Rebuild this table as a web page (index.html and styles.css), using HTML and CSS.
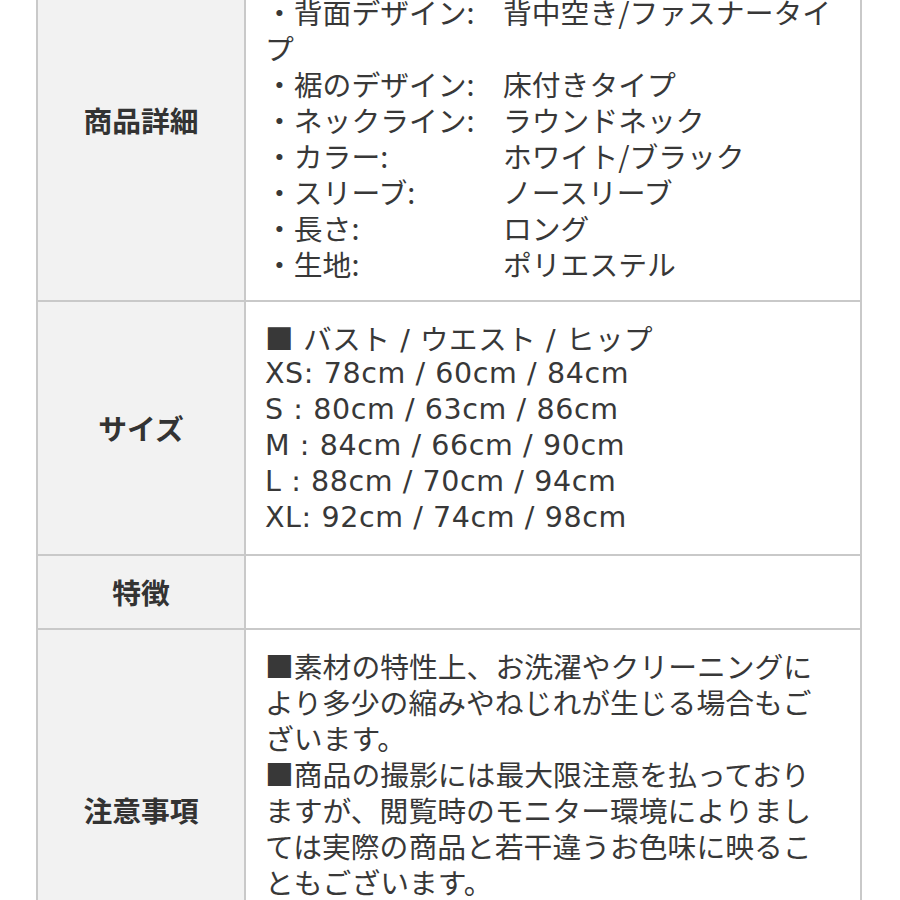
FILE: index.html
```html
<!DOCTYPE html>
<html lang="ja">
<head>
<meta charset="utf-8">
<title>商品情報</title>
<link rel="stylesheet" href="styles.css">
</head>
<body>
<div class="spec">
  <div class="th">商品詳細</div>
  <div class="td td-detail">
    <div><span class="key">・背面デザイン:</span>背中空き/ファスナータイプ</div>
    <div><span class="key">・裾のデザイン:</span>床付きタイプ</div>
    <div><span class="key">・ネックライン:</span>ラウンドネック</div>
    <div><span class="key">・カラー:</span>ホワイト/ブラック</div>
    <div><span class="key">・スリーブ:</span>ノースリーブ</div>
    <div><span class="key">・長さ:</span>ロング</div>
    <div><span class="key">・生地:</span>ポリエステル</div>
  </div>

  <div class="th">サイズ</div>
  <div class="td td-size">
    <div class="row"><span class="sq">■</span> バスト / ウエスト / ヒップ</div>
    <div class="row">XS: 78cm / 60cm / 84cm</div>
    <div class="row">S : 80cm / 63cm / 86cm</div>
    <div class="row">M : 84cm / 66cm / 90cm</div>
    <div class="row">L : 88cm / 70cm / 94cm</div>
    <div class="row">XL: 92cm / 74cm / 98cm</div>
  </div>

  <div class="th">特徴</div>
  <div class="td td-empty"></div>

  <div class="th">注意事項</div>
  <div class="td td-notes">
    <p>■素材の特性上、お洗濯やクリーニングにより多少の縮みやねじれが生じる場合もございます。</p>
    <p>■商品の撮影には最大限注意を払っておりますが、閲覧時のモニター環境によりましては実際の商品と若干違うお色味に映ることもございます。</p>
  </div>
</div>
</body>
</html>
```

FILE: styles.css
```css
html, body {
  margin: 0;
  padding: 0;
  background: #ffffff;
}

body {
  font-family: "Noto Sans CJK JP", "Noto Sans", sans-serif;
  color: #333333;
}

.spec {
  display: grid;
  grid-template-columns: 206px 614px;
  gap: 2px;
  padding: 2px;
  width: 822px;
  margin: -62px 0 0 36px;
  background: #c9c9c9;
}

.th {
  background: #f2f2f2;
  display: flex;
  align-items: center;
  justify-content: center;
  font-weight: 700;
  font-size: 28.8px;
  line-height: 36px;
  color: #333333;
}

.td {
  background: #ffffff;
  padding: 18px 24px 18px 19px;
  font-size: 28.8px;
  line-height: 36px;
  color: #383838;
  min-height: 36px;
}

.td-detail {
  padding-top: 54px;
}

.key {
  display: inline-block;
  width: 238px;
}

.td-size {
  font-family: "DejaVu Sans", "Noto Sans CJK JP", sans-serif;
  font-size: 28.5px;
  letter-spacing: 0.6px;
}

.td-size .row {
  height: 36px;
  white-space: nowrap;
}

.sq {
  font-family: "Noto Sans CJK JP", sans-serif;
  letter-spacing: 0;
}

.td-notes {
  padding-bottom: 90px;
}

.td-notes p {
  margin: 0;
}
```
